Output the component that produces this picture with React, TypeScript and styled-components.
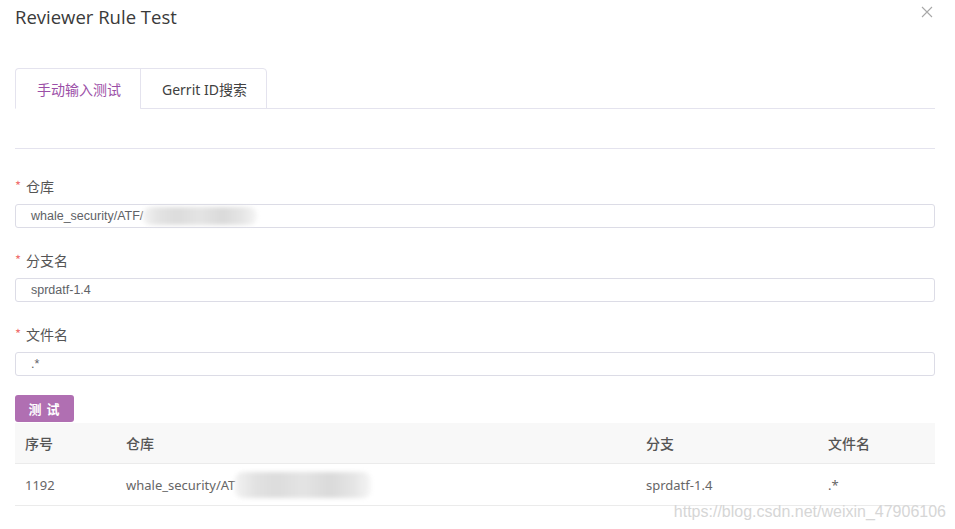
import styled, { createGlobalStyle } from 'styled-components';

const GlobalStyle = createGlobalStyle`
  html, body {
    margin: 0;
    padding: 0;
    background: #ffffff;
  }
  body {
    font-family: "Noto Sans", "Noto Sans CJK SC", sans-serif;
    color: #333333;
  }
  * {
    box-sizing: border-box;
  }
`;

const fields = [
  { label: '仓库', value: 'whale_security/ATF/', smudge: true },
  { label: '分支名', value: 'sprdatf-1.4', smudge: false },
  { label: '文件名', value: '.*', smudge: false },
];

const columns = [
  { title: '序号', width: 101 },
  { title: '仓库', width: 520 },
  { title: '分支', width: 182 },
  { title: '文件名', width: 117 },
];

const App = () => {
  return (
    <>
      <GlobalStyle />
      <St.Dialog>
        <St.Header>
          <St.Title>Reviewer Rule Test</St.Title>
          <St.Close aria-label="close">
            <svg width="12" height="12" viewBox="0 0 12 12">
              <path d="M1 1 L11 11 M11 1 L1 11" stroke="#a8a8a8" strokeWidth="1.1" />
            </svg>
          </St.Close>
        </St.Header>

        <St.Tabs>
          <St.Tab $active>手动输入测试</St.Tab>
          <St.Tab>Gerrit ID搜索</St.Tab>
          <St.TabFill />
        </St.Tabs>

        <St.Divider />

        <St.Form>
          {fields.map((f) => (
            <St.Field key={f.label}>
              <St.Label>
                <i>*</i>
                {f.label}
              </St.Label>
              <St.Input>
                {f.value}
                {f.smudge && <St.Smudge $width={114} />}
              </St.Input>
            </St.Field>
          ))}
        </St.Form>

        <St.TestButton type="button">测 试</St.TestButton>

        <St.Table>
          <St.HeadRow>
            {columns.map((c) => (
              <St.Cell key={c.title} $width={c.width}>
                {c.title}
              </St.Cell>
            ))}
          </St.HeadRow>
          <St.BodyRow>
            <St.Cell $width={101}>1192</St.Cell>
            <St.Cell $width={520}>
              whale_security/AT
              <St.Smudge $width={136} $tall />
            </St.Cell>
            <St.Cell $width={182}>sprdatf-1.4</St.Cell>
            <St.Cell $width={117}>.*</St.Cell>
          </St.BodyRow>
        </St.Table>

        <St.Watermark>https://blog.csdn.net/weixin_47906106</St.Watermark>
      </St.Dialog>
    </>
  );
};

export default App;

const St = {
  Dialog: styled.div`
    position: relative;
    width: 955px;
    height: 529px;
    padding: 0 20px 0 15px;
    overflow: hidden;
  `,
  Header: styled.div`
    display: flex;
    justify-content: space-between;
    align-items: flex-start;
    height: 68px;
    padding-top: 5px;
  `,
  Title: styled.h1`
    margin: 0;
    font-family: "Open Sans", "Noto Sans CJK SC", sans-serif;
    font-size: 18.5px;
    font-weight: 400;
    line-height: 24px;
    color: #3a3a3a;
  `,
  Close: styled.button`
    display: flex;
    margin: 1px 2px 0 0;
    padding: 0;
    border: none;
    background: none;
  `,
  Tabs: styled.div`
    display: flex;
    height: 41px;
  `,
  Tab: styled.div<{ $active?: boolean }>`
    display: flex;
    align-items: center;
    height: 41px;
    padding: 0 19px 0 21px;
    border: 1px solid #e4e3ee;
    border-bottom: ${({ $active }) => ($active ? '1px solid transparent' : '1px solid #e4e3ee')};
    margin-right: -1px;
    font-family: "Noto Sans", "Noto Sans CJK SC", sans-serif;
    font-size: 14px;
    color: ${({ $active }) => ($active ? '#9b4fa7' : '#404040')};

    &:first-child {
      border-top-left-radius: 4px;
    }
    &:nth-child(2) {
      padding: 0 19px 0 21px;
      border-top-right-radius: 4px;
    }
  `,
  TabFill: styled.div`
    flex: 1;
    border-bottom: 1px solid #e4e3ee;
  `,
  Divider: styled.div`
    margin-top: 39px;
    height: 1px;
    background: #e4e3ee;
  `,
  Form: styled.div`
    display: flex;
    flex-direction: column;
    padding-top: 26px;
  `,
  Field: styled.div`
    display: flex;
    flex-direction: column;
    gap: 7px;
    margin-bottom: 21px;

    &:last-child {
      margin-bottom: 19px;
    }
  `,
  Label: styled.label`
    display: flex;
    align-items: center;
    height: 22px;
    font-family: "Noto Sans CJK SC", sans-serif;
    font-size: 14px;
    color: #555555;

    i {
      font-style: normal;
      color: #f07070;
      margin-right: 5px;
      font-size: 13px;
      position: relative;
      top: -1px;
    }
  `,
  Input: styled.div`
    display: flex;
    align-items: center;
    height: 24px;
    padding: 0 15px;
    border: 1px solid #dcdce6;
    border-radius: 3px;
    font-family: "Liberation Sans", Arial, sans-serif;
    font-size: 12.5px;
    color: #606266;
  `,
  Smudge: styled.span<{ $width: number; $tall?: boolean }>`
    display: inline-block;
    width: ${({ $width }) => $width}px;
    height: ${({ $tall }) => ($tall ? 26 : 18)}px;
    background: linear-gradient(
      90deg,
      #f2f2f2 0%,
      #e2e2e2 15%,
      #dcdcdc 30%,
      #e4e4e4 50%,
      #dadada 70%,
      #e6e6e6 88%,
      #f6f6f6 100%
    );
    filter: blur(2px);
    border-radius: 8px;
  `,
  TestButton: styled.button`
    display: flex;
    align-items: center;
    justify-content: center;
    width: 59px;
    height: 27px;
    padding: 0;
    border: none;
    border-radius: 3px;
    background: #b06fb2;
    font-family: "Noto Sans CJK SC", sans-serif;
    font-size: 13px;
    font-weight: 700;
    color: #ffffff;
    letter-spacing: 1px;
  `,
  Table: styled.div`
    display: flex;
    flex-direction: column;
    margin-top: 1px;
  `,
  HeadRow: styled.div`
    display: flex;
    height: 41px;
    background: #f8f8f8;
    border-bottom: 1px solid #ebebeb;
    font-family: "Noto Sans CJK SC", sans-serif;
    font-size: 14px;
    font-weight: 500;
    color: #555555;
  `,
  BodyRow: styled.div`
    display: flex;
    height: 42px;
    border-bottom: 1px solid #ebebeb;
    font-family: "Noto Sans", "Noto Sans CJK SC", sans-serif;
    font-size: 13px;
    color: #666666;
  `,
  Cell: styled.div<{ $width: number }>`
    display: flex;
    align-items: center;
    width: ${({ $width }) => $width}px;
    padding-left: 10px;
    white-space: nowrap;
  `,
  Watermark: styled.div`
    position: absolute;
    right: 9px;
    bottom: 8px;
    font-family: "Liberation Sans", Arial, sans-serif;
    font-size: 16px;
    color: #d6d6d6;
    pointer-events: none;
  `,
};
